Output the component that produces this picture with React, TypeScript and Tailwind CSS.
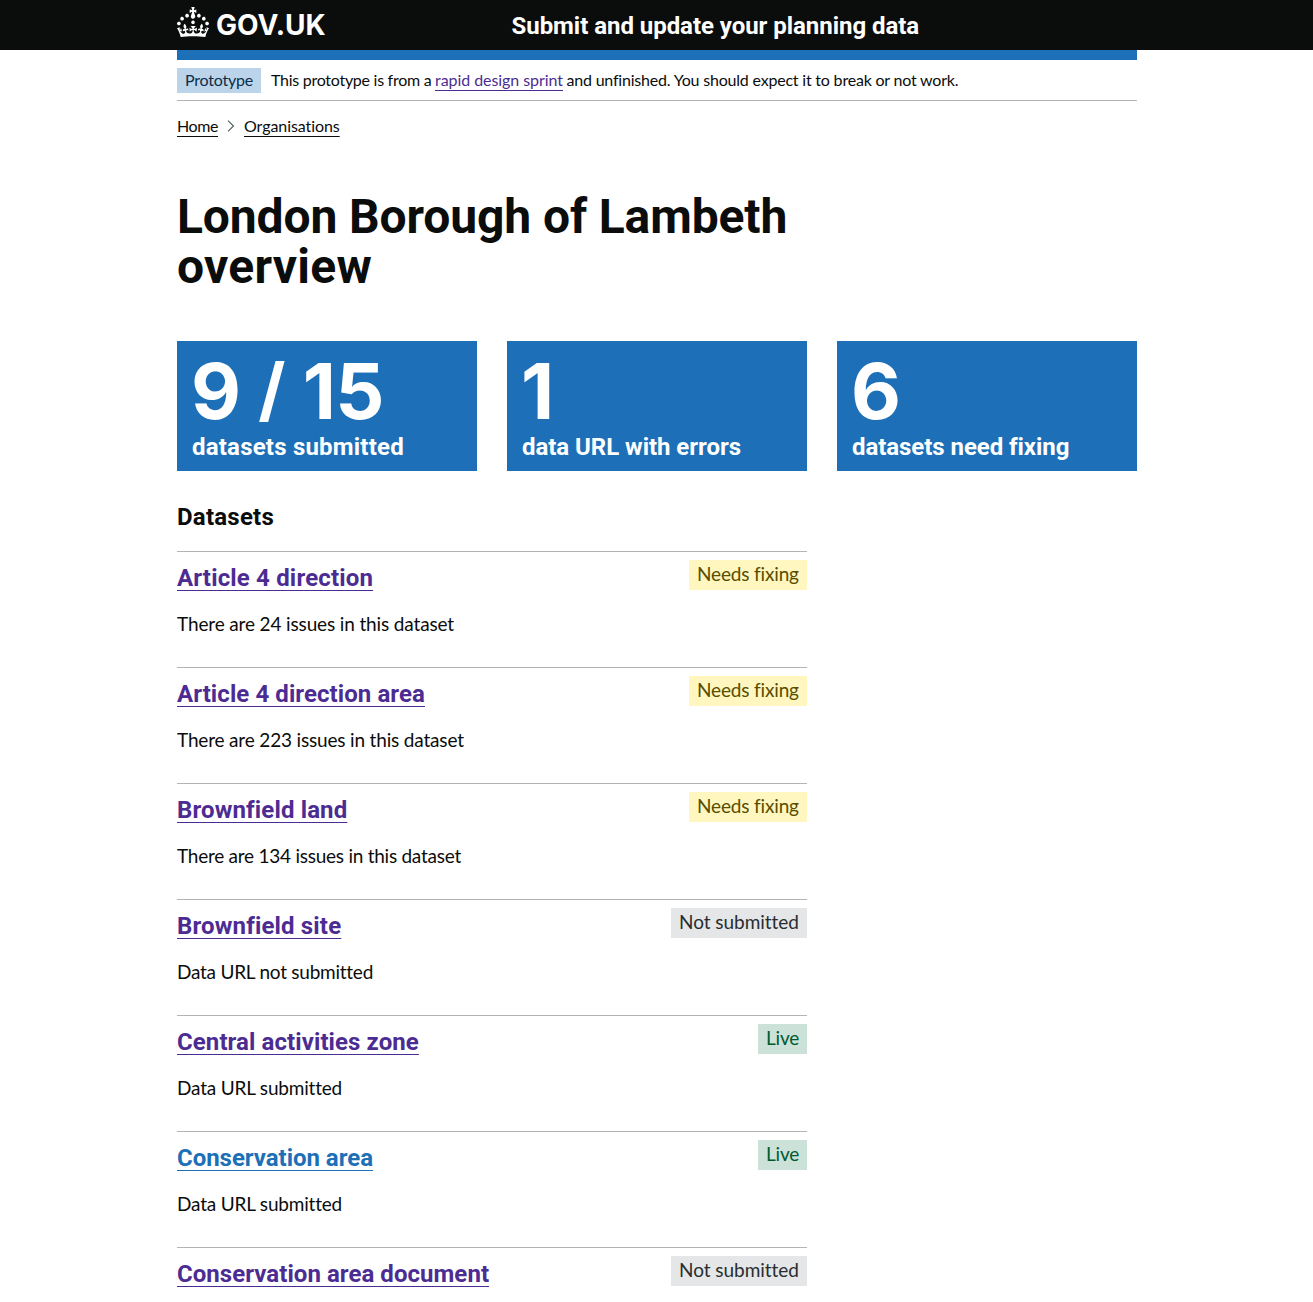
import React from "react";

type Status = "Needs fixing" | "Not submitted" | "Live";

type Dataset = {
  name: string;
  nameTracking: string;
  detail?: string;
  detailTracking?: string;
  status: Status;
  visited: boolean;
};

const datasets: Dataset[] = [
  { name: "Article 4 direction", nameTracking: "tracking-[0.17px]", detail: "There are 24 issues in this dataset", detailTracking: "tracking-[-0.14px]", status: "Needs fixing", visited: true },
  { name: "Article 4 direction area", nameTracking: "tracking-[0.08px]", detail: "There are 223 issues in this dataset", detailTracking: "tracking-[-0.17px]", status: "Needs fixing", visited: true },
  { name: "Brownfield land", nameTracking: "tracking-[0.14px]", detail: "There are 134 issues in this dataset", detailTracking: "tracking-[-0.25px]", status: "Needs fixing", visited: true },
  { name: "Brownfield site", nameTracking: "tracking-[0.16px]", detail: "Data URL not submitted", detailTracking: "tracking-[-0.24px]", status: "Not submitted", visited: true },
  { name: "Central activities zone", nameTracking: "tracking-[0.09px]", detail: "Data URL submitted", detailTracking: "tracking-[-0.19px]", status: "Live", visited: true },
  { name: "Conservation area", nameTracking: "tracking-[-0.03px]", detail: "Data URL submitted", detailTracking: "tracking-[-0.19px]", status: "Live", visited: false },
  { name: "Conservation area document", nameTracking: "tracking-[0.05px]", status: "Not submitted", visited: true },
];

const tagStyles: Record<Status, string> = {
  "Needs fixing": "w-[118px] bg-[#fff7bf] text-[#594d00] tracking-[-0.16px]",
  "Not submitted": "w-[136px] bg-[#e5e6e7] text-[#282d30] tracking-[-0.04px]",
  Live: "w-[49px] bg-[#cce2d8] text-[#005a30] tracking-[-0.22px]",
};

const stats = [
  {
    value: (
      <>
        9 <span className="text-[70px] align-[5px] leading-none">/</span> 15
      </>
    ),
    label: "datasets submitted",
    tracking: "tracking-[0.21px]",
  },
  { value: "1", label: "data URL with errors", tracking: "tracking-[-0.04px]" },
  { value: "6", label: "datasets need fixing", tracking: "tracking-[-0.06px]" },
];

function Crown() {
  return (
    <svg viewBox="0 0 32 30" width="32" height="30" fill="currentColor" aria-hidden="true">
      <path d="M22.6 10.4c-1 .4-2-.1-2.4-1-.4-.9.1-2 1-2.4.9-.4 2 .1 2.4 1s-.1 2-1 2.4m-5.9 6.7c-.9.4-2-.1-2.4-1-.4-.9.1-2 1-2.4.9-.4 2 .1 2.4 1s-.1 2-1 2.4m10.8-3.7c-1 .4-2-.1-2.4-1-.4-.9.1-2 1-2.4.9-.4 2 .1 2.4 1s0 2-1 2.4m3.3 4.8c-1 .4-2-.1-2.4-1-.4-.9.1-2 1-2.4.9-.4 2 .1 2.4 1s-.1 2-1 2.4M17 4.7l2.3 1.2V2.5l-2.3.7-.2-.2.9-3h-3.4l.9 3-.2.2c-.1.1-2.3-.7-2.3-.7v3.4L15 4.7c.1.1.1.2.2.2l-1.3 4c-.1.2-.1.4-.1.6 0 1.1.8 2 1.9 2.2h.7c1-.2 1.9-1.1 1.9-2.1 0-.2 0-.4-.1-.6l-1.3-4c-.1-.2 0-.2.1-.3m-7.6 5.7c.9.4 2-.1 2.4-1 .4-.9-.1-2-1-2.4-.9-.4-2 .1-2.4 1s0 2 1 2.4m-5 3c.9.4 2-.1 2.4-1 .4-.9-.1-2-1-2.4-.9-.4-2 .1-2.4 1s.1 2 1 2.4m-3.2 4.8c.9.4 2-.1 2.4-1 .4-.9-.1-2-1-2.4-.9-.4-2 .1-2.4 1s0 2 1 2.4m14.8 11c4.4 0 8.6.3 12.3.8 1.1-4.5 2.4-7 3.7-8.8l-2.5-.9c.2 1.3.3 1.9 0 2.7-.4-.4-.8-1.1-1.1-2.3l-1.2 4c.7-.5 1.3-.8 2-.9-1.1 2.5-2.6 3.1-3.5 3-1.1-.2-1.7-1.2-1.5-2.1.3-1.2 1.5-1.5 2.1-.1 1.1-2.3-.8-3-2-2.3 1.9-1.9 2.1-3.5.6-5.6-2.1 1.6-2.1 3.2-1.2 5.5-1.2-1.4-3.2-.6-2.5 1.6.9-1.4 2.1-.5 1.9.8-.2 1.1-1.7 2.1-3.5 1.9-2.7-.2-2.9-2.1-2.9-3.6.7-.1 1.9.5 2.9 1.9l.4-4.3c-1.1 1.1-2.1 1.4-3.2 1.4.4-1.2 2.1-3 2.1-3h-5.4s1.7 1.9 2.1 3c-1.1 0-2.1-.2-3.2-1.4l.4 4.3c1-1.4 2.2-2 2.9-1.9-.1 1.5-.2 3.4-2.9 3.6-1.9.2-3.4-.8-3.5-1.9-.2-1.3 1-2.2 1.9-.8.7-2.3-1.2-3-2.5-1.6.9-2.2.9-3.9-1.2-5.5-1.5 2-1.3 3.7.6 5.6-1.2-.7-3.1 0-2 2.3.6-1.4 1.8-1.1 2.1.1.2.9-.3 1.9-1.5 2.1-.9.2-2.4-.5-3.5-3 .6 0 1.2.3 2 .9l-1.2-4c-.3 1.1-.7 1.9-1.1 2.3-.3-.8-.2-1.4 0-2.7l-2.9.9C1.3 23 2.6 25.5 3.7 30c3.7-.5 7.9-.8 12.3-.8" />
    </svg>
  );
}

const link = "underline decoration-1 [text-decoration-skip-ink:auto]";

export default function App() {
  return (
    <div className="h-[1302px] overflow-hidden bg-white font-[Lato,sans-serif] text-[#0b0c0c]">
      <header className="bg-[#0b0c0c] text-white">
        <div className="ml-[177px] flex h-[50px] w-[960px] items-start">
          <a className="flex w-[334.5px] pt-[7px]">
            <Crown />
            <span className="ml-[7px] mt-[3px] font-[Inter,sans-serif] text-[28px] leading-[30px] font-bold">GOV.UK</span>
          </a>
          <a className="pt-[11px] font-[Roboto,sans-serif] text-[24px] leading-[30px] font-bold tracking-[-0.04px]">Submit and update your planning data</a>
        </div>
      </header>
      <div className="ml-[177px] w-[960px]">
        <div className="h-[10px] bg-[#1d70b8]" />
        <div className="flex h-[41px] border-b border-[#b1b4b6] pt-2 text-[16px] leading-[23px]">
          <strong className="mr-[10px] h-[25px] w-[84px] bg-[#bbd4ea] pl-2 font-normal tracking-[-0.21px] text-[#0c2d4a]">Prototype</strong>
          <p className="flex whitespace-pre">
            <span className="w-[164px] tracking-[-0.27px]">This prototype is from a</span>
            <a className={`${link} w-[128px] text-[#4c2c92] tracking-[-0.06px] underline-offset-[4px]`}>rapid design sprint</a>
            <span className="ml-[3.5px] tracking-[-0.2px]">and unfinished. You should expect it to break or not work.</span>
          </p>
        </div>
        <nav className="mt-[15px] flex h-5 items-center text-[16px] leading-5">
          <a className={`${link} w-[41px] tracking-[-0.41px] underline-offset-[4px]`}>Home</a>
          <svg className="ml-[9px] mr-[9px]" width="8" height="12" viewBox="0 0 8 12" fill="none" stroke="#505a5f" strokeWidth="1.1" aria-hidden="true">
            <path d="M1 .7 6.5 6 1 11.3" />
          </svg>
          <a className={`${link} tracking-[-0.07px] underline-offset-[4px]`}>Organisations</a>
        </nav>
        <main>
          <h1 className="mt-[56px] w-[630px] font-[Roboto,sans-serif] text-[48px] leading-[50px] font-bold tracking-[-0.12px]">
            London Borough of Lambeth <span className="tracking-[0.27px]">overview</span>
          </h1>
          <div className="mt-[49px] grid grid-cols-3 gap-[30px]">
            {stats.map((s) => (
              <div key={s.label} className="h-[130px] bg-[#1d70b8] px-[15px] pt-[10px] text-white">
                <div className="-ml-[1px] h-[80px] font-[Inter,sans-serif] text-[77px] leading-[80px] font-bold tracking-[-0.5px] whitespace-nowrap">{s.value}</div>
                <div className={`pt-px font-[Roboto,sans-serif] text-[24px] leading-[30px] font-bold ${s.tracking}`}>{s.label}</div>
              </div>
            ))}
          </div>
          <h2 className="mt-[31px] font-[Roboto,sans-serif] text-[24px] leading-[30px] font-bold tracking-[0.23px]">Datasets</h2>
          <ul className="mt-[19px] w-[630px]">
            {datasets.map((d) => (
              <li key={d.name} className="h-[116px] border-t border-[#b1b4b6]">
                <div className="flex items-start justify-between">
                  <h3 className="pt-[11px] font-[Roboto,sans-serif] text-[24px] leading-[30px] font-bold">
                    <a className={`${link} ${d.nameTracking} underline-offset-[4px] ${d.visited ? "text-[#4c2c92]" : "text-[#1d70b8]"}`}>{d.name}</a>
                  </h3>
                  <strong className={`mt-2 h-[30px] pl-2 text-[19px] leading-[28px] font-normal whitespace-nowrap ${tagStyles[d.status]}`}>{d.status}</strong>
                </div>
                {d.detail && <p className={`mt-[18px] text-[19px] leading-[25px] ${d.detailTracking}`}>{d.detail}</p>}
              </li>
            ))}
          </ul>
        </main>
      </div>
    </div>
  );
}
